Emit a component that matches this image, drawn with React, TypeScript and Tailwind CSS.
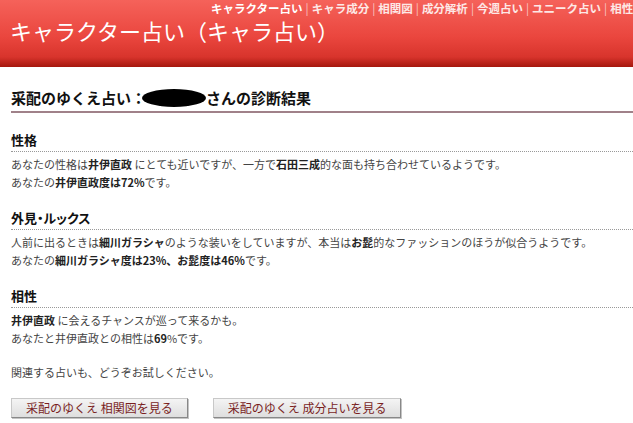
import React from "react";

const navItems = ["キャラ成分", "相関図", "成分解析", "今週占い", "ユニーク占い", "相性占い"];

function Section({ title, children }: { title: string; children: React.ReactNode }) {
  return (
    <section className="mt-[18px]">
      <h3 className="border-b border-dotted border-[#999] pb-[2px] text-[13px] font-bold leading-[18px] text-[#111] [font-feature-settings:'palt']">
        {title}
      </h3>
      <div className="mt-[3px] text-[11px] leading-[18px] text-[#444]">{children}</div>
    </section>
  );
}

function Btn({ children }: { children: React.ReactNode }) {
  return (
    <button
      type="button"
      className="h-[20px] border border-[#c8c8c8] border-r-[#888] border-b-[#888] bg-[linear-gradient(#f4f4f4,#dedede)] px-[14px] text-[12px] leading-[18px] text-[#7a1f1f] shadow-[1px_1px_0_#c4c4c4]"
    >
      {children}
    </button>
  );
}

export default function App() {
  return (
    <div className="h-[423px] w-[633px] overflow-hidden bg-white font-['Noto_Sans_CJK_JP',sans-serif]">
      <header className="relative h-[67px] bg-[linear-gradient(#f5625a_0%,#ea463e_55%,#d8342c_85%,#a5170e_100%)]">
        <nav className="absolute left-[211px] top-[1px] flex whitespace-nowrap text-[11.5px] font-bold leading-[14px] text-[#fde8e6]">
          <span className="text-white">キャラクター占い</span>
          {navItems.map((n) => (
            <span key={n} className="flex">
              <span className="px-[3px] font-normal text-[#f8c8c4]">|</span>
              <span>{n}</span>
            </span>
          ))}
        </nav>
        <h1 className="pl-[10px] pt-[18px] text-[22px] leading-[24px] text-white">キャラクター占い（キャラ占い）</h1>
      </header>

      <main className="pl-[11px] pt-[20px]">
        <h2 className="flex items-center border-b-2 border-[#a08189] pb-[2px] text-[15px] font-bold leading-[22px] text-[#111]">
          <span>采配のゆくえ占い：</span>
          <span className="-ml-[4px] inline-block h-[18px] w-[64px] rounded-[50%] bg-black" />
          <span>さんの診断結果</span>
        </h2>

        <Section title="性格">
          <p>
            あなたの性格は<b className="text-[#222]">井伊直政</b> にとても近いですが、一方で<b className="text-[#222]">石田三成</b>的な面も持ち合わせているようです。
          </p>
          <p>
            あなたの<b className="text-[#222]">井伊直政度は72%</b>です。
          </p>
        </Section>

        <Section title="外見・ルックス">
          <p>
            人前に出るときは<b className="text-[#222]">細川ガラシャ</b>のような装いをしていますが、本当は<b className="text-[#222]">お髭</b>的なファッションのほうが似合うようです。
          </p>
          <p>
            あなたの<b className="text-[#222]">細川ガラシャ度は23%、お髭度は46%</b>です。
          </p>
        </Section>

        <Section title="相性">
          <p>
            <b className="text-[#222]">井伊直政</b> に会えるチャンスが巡って来るかも。
          </p>
          <p>
            あなたと井伊直政との相性は<b className="text-[#222]">69</b>%です。
          </p>
        </Section>

        <p className="mt-[16px] text-[11px] leading-[18px] text-[#444]">関連する占いも、どうぞお試しください。</p>

        <div className="mt-[17px] flex gap-[25px]">
          <Btn>采配のゆくえ 相関図を見る</Btn>
          <Btn>采配のゆくえ 成分占いを見る</Btn>
        </div>
      </main>
    </div>
  );
}
